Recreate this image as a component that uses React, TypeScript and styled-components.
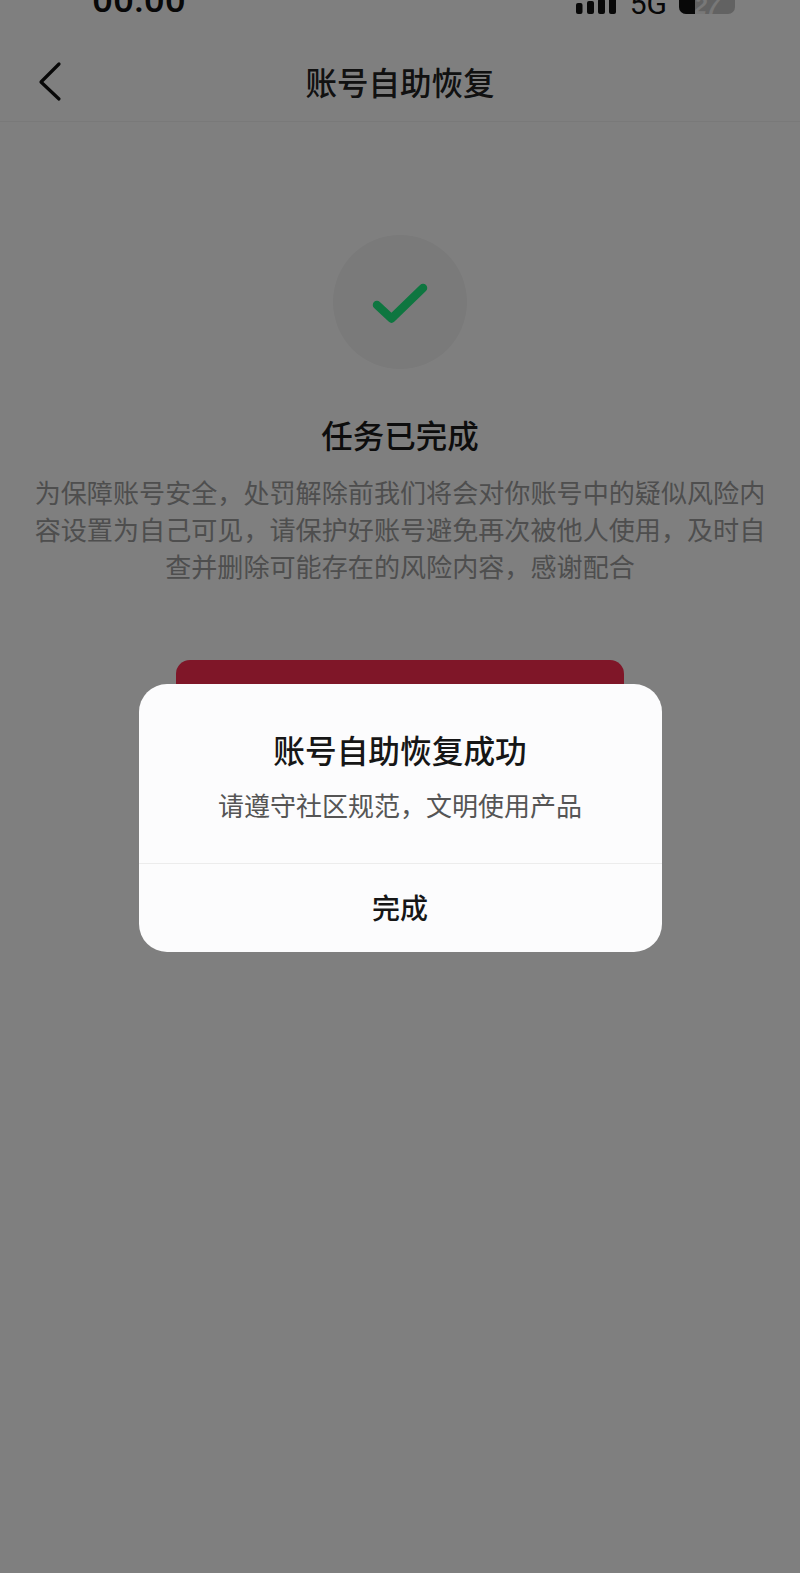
import React from "react";
import styled, { createGlobalStyle } from "styled-components";

const Global = createGlobalStyle`
  html, body { margin: 0; padding: 0; background: #fff; }
  #root { width: 800px; height: 1573px; }
  * { box-sizing: border-box; }
`;

const FONT = `"Noto Sans CJK SC", "Liberation Sans", sans-serif`;

const Page = styled.div`
  position: relative;
  width: 800px;
  height: 1573px;
  overflow: hidden;
  background: #fff;
  font-family: ${FONT};
  display: flex;
  flex-direction: column;
  align-items: center;
`;

const StatusBar = styled.div`
  width: 100%;
  height: 14px;
  padding: 0 65px 0 92px;
  overflow: hidden;
  display: flex;
  align-items: flex-end;
  justify-content: space-between;
  flex: none;
`;

const Time = styled.div`
  font-family: Roboto, "Liberation Sans", sans-serif;
  font-weight: 500;
  font-size: 37px;
  line-height: 36px;
  margin-bottom: -4px;
  color: #101010;
`;

const StatusRight = styled.div`
  display: flex;
  align-items: flex-end;
  gap: 12px;
`;

const Net = styled.div`
  font-family: Roboto, "Liberation Sans", sans-serif;
  font-size: 30px;
  line-height: 26px;
  margin-bottom: -3px;
  color: #101010;
`;

const Battery = styled.div`
  width: 56px;
  height: 24px;
  border-radius: 7px;
  overflow: hidden;
  background: #c4c4c4;
  display: flex;
  align-items: flex-end;
  justify-content: center;
  position: relative;
`;

const BatteryFill = styled.div`
  position: absolute;
  left: 0;
  top: 0;
  bottom: 0;
  width: 16px;
  background: #101010;
`;

const BatteryText = styled.span`
  font-family: "Liberation Sans", sans-serif;
  font-weight: 700;
  font-style: italic;
  font-size: 23px;
  line-height: 22px;
  margin-bottom: -3px;
  color: #f0f0f0;
`;

const Header = styled.header`
  width: 100%;
  height: 108px;
  flex: none;
  padding-top: 26px;
  border-bottom: 1px solid #f3f3f3;
  display: flex;
  align-items: center;
  justify-content: center;
  position: relative;
`;

const BackIcon = styled.svg`
  position: absolute;
  left: 36px;
  top: 46px;
`;

const HeaderTitle = styled.h1`
  margin: 0;
  font-size: 31.5px;
  font-weight: 500;
  line-height: 44px;
  color: #222;
`;

const CheckCircle = styled.div`
  width: 134px;
  height: 134px;
  margin-top: 113px;
  border-radius: 50%;
  background: #f4f4f4;
  flex: none;
  display: flex;
  align-items: center;
  justify-content: center;
`;

const TaskTitle = styled.h2`
  margin: 43px 0 0;
  font-size: 31.5px;
  font-weight: 500;
  line-height: 44px;
  color: #1a1a1a;
`;

const Description = styled.p`
  margin: 18px 0 0;
  width: 736px;
  font-size: 26.1px;
  line-height: 37px;
  text-align: center;
  color: #9c9c9c;
`;

const RedButton = styled.div`
  margin-top: 75px;
  width: 448px;
  height: 80px;
  border-radius: 14px;
  background: #fe2c50;
  flex: none;
`;

const Overlay = styled.div`
  position: absolute;
  inset: 0;
  background: rgba(0, 0, 0, 0.5);
  display: flex;
  justify-content: center;
  padding-top: 684px;
`;

const Dialog = styled.div`
  width: 523px;
  height: 268px;
  border-radius: 28px;
  background: #fcfcfd;
  display: flex;
  flex-direction: column;
`;

const DialogBody = styled.div`
  height: 180px;
  flex: none;
  padding-top: 43px;
  border-bottom: 1px solid #ececec;
  display: flex;
  flex-direction: column;
  align-items: center;
`;

const DialogTitle = styled.div`
  font-size: 31.7px;
  font-weight: 500;
  line-height: 44px;
  color: #161616;
`;

const DialogText = styled.div`
  margin-top: 16px;
  font-size: 26px;
  line-height: 36px;
  color: #555;
`;

const DialogAction = styled.button`
  flex: 1;
  border: 0;
  padding: 0 0 2px;
  background: none;
  font-family: ${FONT};
  font-size: 28px;
  font-weight: 500;
  color: #161616;
`;

export default function App() {
  return (
    <Page>
      <Global />
      <StatusBar>
        <Time>00:00</Time>
        <StatusRight>
          <svg width="42" height="14" viewBox="0 0 42 14">
            <g fill="#101010">
              <rect x="0" y="3" width="6.5" height="11" rx="2" />
              <rect x="11" y="1" width="7" height="13" rx="2" />
              <rect x="22" y="-1" width="7" height="15" rx="2" />
              <rect x="33" y="-2" width="7" height="16" rx="2" />
            </g>
          </svg>
          <Net>5G</Net>
          <Battery>
            <BatteryFill />
            <BatteryText>27</BatteryText>
          </Battery>
        </StatusRight>
      </StatusBar>
      <Header>
        <BackIcon width="28" height="42" viewBox="0 0 28 42" fill="none">
          <path d="M23 4 L5 22 L23 39" stroke="#101010" strokeWidth="3.2" strokeLinecap="round" strokeLinejoin="round" />
        </BackIcon>
        <HeaderTitle>账号自助恢复</HeaderTitle>
      </Header>
      <CheckCircle>
        <svg width="64" height="50" viewBox="0 0 64 50" fill="none">
          <path d="M9 28 L23.5 41.5 L55 11" stroke="#1cec80" strokeWidth="8.5" strokeLinecap="round" strokeLinejoin="round" />
        </svg>
      </CheckCircle>
      <TaskTitle>任务已完成</TaskTitle>
      <Description>
        为保障账号安全，处罚解除前我们将会对你账号中的疑似风险内容设置为自己可见，请保护好账号避免再次被他人使用，及时自查并删除可能存在的风险内容，感谢配合
      </Description>
      <RedButton />
      <Overlay>
        <Dialog>
          <DialogBody>
            <DialogTitle>账号自助恢复成功</DialogTitle>
            <DialogText>请遵守社区规范，文明使用产品</DialogText>
          </DialogBody>
          <DialogAction>完成</DialogAction>
        </Dialog>
      </Overlay>
    </Page>
  );
}
